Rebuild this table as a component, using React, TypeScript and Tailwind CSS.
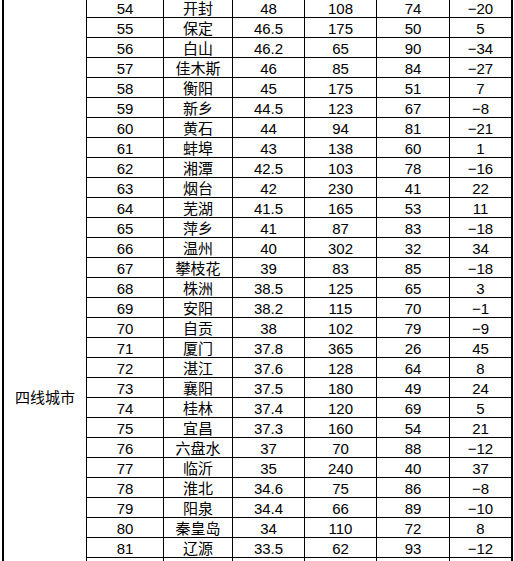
import React from "react";

const rows: [string, string, string, string, string, string][] = [
  ["54", "开封", "48", "108", "74", "−20"],
  ["55", "保定", "46.5", "175", "50", "5"],
  ["56", "白山", "46.2", "65", "90", "−34"],
  ["57", "佳木斯", "46", "85", "84", "−27"],
  ["58", "衡阳", "45", "175", "51", "7"],
  ["59", "新乡", "44.5", "123", "67", "−8"],
  ["60", "黄石", "44", "94", "81", "−21"],
  ["61", "蚌埠", "43", "138", "60", "1"],
  ["62", "湘潭", "42.5", "103", "78", "−16"],
  ["63", "烟台", "42", "230", "41", "22"],
  ["64", "芜湖", "41.5", "165", "53", "11"],
  ["65", "萍乡", "41", "87", "83", "−18"],
  ["66", "温州", "40", "302", "32", "34"],
  ["67", "攀枝花", "39", "83", "85", "−18"],
  ["68", "株洲", "38.5", "125", "65", "3"],
  ["69", "安阳", "38.2", "115", "70", "−1"],
  ["70", "自贡", "38", "102", "79", "−9"],
  ["71", "厦门", "37.8", "365", "26", "45"],
  ["72", "湛江", "37.6", "128", "64", "8"],
  ["73", "襄阳", "37.5", "180", "49", "24"],
  ["74", "桂林", "37.4", "120", "69", "5"],
  ["75", "宜昌", "37.3", "160", "54", "21"],
  ["76", "六盘水", "37", "70", "88", "−12"],
  ["77", "临沂", "35", "240", "40", "37"],
  ["78", "淮北", "34.6", "75", "86", "−8"],
  ["79", "阳泉", "34.4", "66", "89", "−10"],
  ["80", "秦皇岛", "34", "110", "72", "8"],
  ["81", "辽源", "33.5", "62", "93", "−12"],
  ["", "", "", "", "", ""],
];

export default function App() {
  return (
    <div
      className="w-[514px] h-[561px] overflow-hidden bg-white text-black text-[15px]"
      style={{ fontFamily: '"Liberation Sans", "Noto Sans CJK SC", sans-serif' }}
    >
      <div className="flex ml-[2px] -mt-[2px] w-[511px] border-l-2 border-r-2 border-black">
        <div className="w-[83px] shrink-0 border-r border-black pt-[390px]">
          <div className="h-[20px] leading-[20px] text-center">四线城市</div>
        </div>
        <div className="flex flex-col flex-1">
          {rows.map((r, i) => (
            <div
              key={i}
              className="grid grid-cols-[77px_69px_72px_72px_73px_1fr] h-[20px] border-b border-black leading-[20px]"
            >
              <div className="border-r border-black text-center pt-[1px]">{r[0]}</div>
              <div className="border-r border-black text-center pt-[1px]">{r[1]}</div>
              <div className="border-r border-black text-center pt-[1px]">{r[2]}</div>
              <div className="border-r border-black text-center pt-[1px]">{r[3]}</div>
              <div className="border-r border-black text-center pt-[1px]">{r[4]}</div>
              <div className="text-center pt-[1px]">{r[5]}</div>
            </div>
          ))}
        </div>
      </div>
    </div>
  );
}
